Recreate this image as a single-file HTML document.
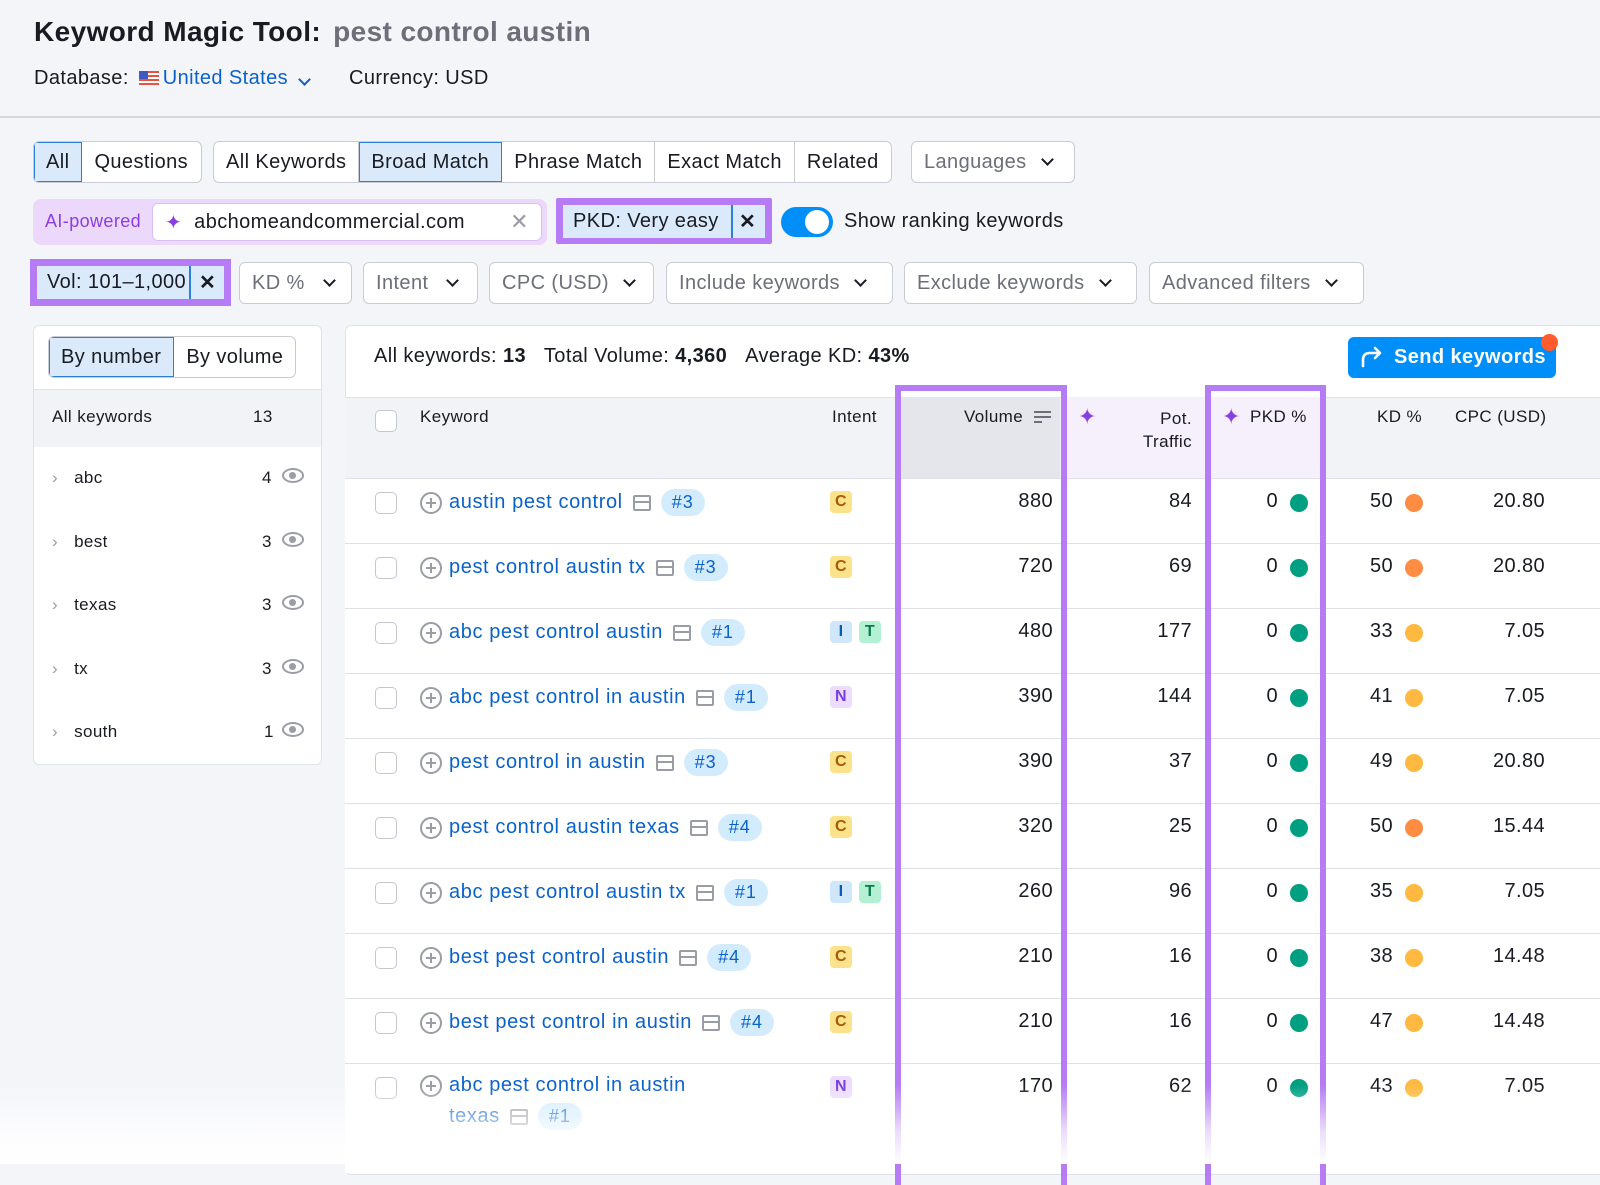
<!DOCTYPE html>
<html><head><meta charset="utf-8">
<style>
*{box-sizing:border-box;margin:0;padding:0}
body{width:1600px;height:1164px;background:#f4f5f9;font-family:"Liberation Sans",sans-serif;color:#191b23;position:relative;overflow:hidden;letter-spacing:0.4px}
.a{position:absolute}
.btn{position:absolute;height:42px;border:1px solid #c9ccd6;border-radius:6px;background:#fff;font-size:20px;display:flex;align-items:center;padding:0 12px;color:#191b23}
.grey{color:#6c6e79}
.chev{display:inline-block;width:9px;height:9px;border-right:2.5px solid #191b23;border-bottom:2.5px solid #191b23;transform:rotate(45deg);margin-left:16px;margin-top:-6px}
.seg{position:absolute;display:flex;height:42px;border:1px solid #c9ccd6;border-radius:6px;background:#fff;overflow:hidden;font-size:20px}
.seg div{padding:0 12px;display:flex;align-items:center;border-right:1px solid #c9ccd6}
.seg div:last-child{border-right:none}
.seg .on{background:#dbeafa;outline:1.5px solid #2b7fd6;outline-offset:-1.5px}
.row{position:absolute;left:345px;width:1255px;height:65px;border-top:1px solid #dfe0ea;background:#fff}
.cb{position:absolute;left:30px;top:13px;width:22px;height:22px;border:1.5px solid #c4c7d0;border-radius:5px;background:#fff}
.kw{position:absolute;left:75px;top:10px;display:flex;align-items:center;font-size:20px;color:#0a62c9;white-space:nowrap;letter-spacing:0.6px}
.plus{width:22px;height:22px;border:2px solid #9a9ca6;border-radius:50%;position:relative;margin-right:7px}
.plus:before{content:"";position:absolute;left:4px;top:8px;width:10px;height:2px;background:#9a9ca6}
.plus:after{content:"";position:absolute;left:8px;top:4px;width:2px;height:10px;background:#9a9ca6}
.ser{width:18px;height:16px;border:2px solid #9a9ca6;border-radius:2px;margin:0 10px;position:relative}
.ser:before{content:"";position:absolute;left:0;right:0;top:4px;height:2px;background:#9a9ca6}
.pos{background:#d3ecfd;color:#0a62c9;border-radius:14px;padding:3px 11px;font-size:18px;letter-spacing:1px}
.it{position:absolute;top:12px;width:22px;height:22px;border-radius:4px;font-size:16px;font-weight:bold;display:flex;align-items:center;justify-content:center}
.C{background:#fde28c;color:#a85a05}.I{background:#cfe6fb;color:#0a5bb5}.T{background:#b3f0d4;color:#0b7a4e}.N{background:#ecdcff;color:#7a3ee0}
.num{position:absolute;top:11px;font-size:20px;text-align:right;width:100px}
.dot{position:absolute;top:15px;width:18px;height:18px;border-radius:50%}
</style></head><body>
<div class="a" style="left:34px;top:16px;font-size:28px;font-weight:bold">Keyword Magic Tool:<span style="color:#6c6e79;font-weight:bold;margin-left:12px">pest control austin</span></div>
<div class="a" style="left:34px;top:67px;font-size:20px">Database: <span style="display:inline-block;width:20px;height:14px;background:repeating-linear-gradient(#e8523f 0 2px,#fff 2px 4px);position:relative;vertical-align:-1px;margin:0 4px"><span style="position:absolute;left:0;top:0;width:9px;height:8px;background:#3b5bc2"></span></span><span style="color:#0a62c9">United States</span><span class="chev" style="border-color:#0a62c9;margin-left:12px"></span><span style="margin-left:40px">Currency: USD</span></div>
<div class="a" style="left:0;top:116px;width:1600px;height:2px;background:#d4d6de"></div>

<div class="seg" style="left:33px;top:141px;width:169px"><div class="on">All</div><div>Questions</div></div>
<div class="seg" style="left:213px;top:141px"><div>All Keywords</div><div class="on">Broad Match</div><div>Phrase Match</div><div>Exact Match</div><div>Related</div></div>
<div class="btn" style="left:911px;top:141px;width:164px"><span class="grey">Languages</span><span class="chev"></span></div>

<div class="a" style="left:33px;top:199px;width:514px;height:46px;background:#ecd8fb;border-radius:8px"></div>
<div class="a" style="left:45px;top:211px;font-size:18px;color:#8a3ee0">AI-powered</div>
<div class="a" style="left:152px;top:203px;width:390px;height:38px;background:#fff;border-radius:6px;border:1px solid #d8c0f5;font-size:20px;display:flex;align-items:center;padding-left:12px"><span style="color:#8a3ee0;font-size:20px;margin-right:12px">✦</span>abchomeandcommercial.com<span style="margin-left:auto;margin-right:12px;color:#9a9ca6;font-size:22px">✕</span></div>
<div class="a" style="left:556px;top:198px;width:216px;height:46px;background:#b57cf6;border-radius:2px"></div>
<div class="a" style="left:563px;top:205px;width:202px;height:33px;background:#dbeafa;font-size:20px;display:flex;align-items:center;padding-left:10px">PKD: Very easy<span style="position:absolute;left:168px;top:0;height:33px;width:1.5px;background:#2b7fd6"></span><span style="position:absolute;left:176px;font-weight:bold;font-size:20px">✕</span></div>
<div class="a" style="left:781px;top:207px;width:52px;height:30px;border-radius:15px;background:#008ff8"><div class="a" style="left:24px;top:3px;width:24px;height:24px;border-radius:50%;background:#fff"></div></div>
<div class="a" style="left:844px;top:210px;font-size:20px">Show ranking keywords</div>

<div class="a" style="left:30px;top:259px;width:201px;height:47px;background:#b57cf6"></div>
<div class="a" style="left:37px;top:266px;width:187px;height:33px;background:#dbeafa;font-size:20px;display:flex;align-items:center;padding-left:10px">Vol: 101–1,000<span style="position:absolute;left:152px;top:0;height:33px;width:1.5px;background:#2b7fd6"></span><span style="position:absolute;left:162px;font-weight:bold">✕</span></div>
<div class="btn" style="left:239px;top:262px;width:113px"><span class="grey">KD %</span><span class="chev" style="margin-left:20px"></span></div>
<div class="btn" style="left:363px;top:262px;width:115px"><span class="grey">Intent</span><span class="chev" style="margin-left:20px"></span></div>
<div class="btn" style="left:489px;top:262px;width:165px"><span class="grey">CPC (USD)</span><span class="chev"></span></div>
<div class="btn" style="left:666px;top:262px;width:227px"><span class="grey">Include keywords</span><span class="chev"></span></div>
<div class="btn" style="left:904px;top:262px;width:233px"><span class="grey">Exclude keywords</span><span class="chev"></span></div>
<div class="btn" style="left:1149px;top:262px;width:215px"><span class="grey">Advanced filters</span><span class="chev"></span></div>

<div class="a" style="left:33px;top:325px;width:289px;height:440px;background:#fff;border:1px solid #e0e2ea;border-radius:6px"></div>
<div class="seg" style="left:48px;top:336px"><div class="on">By number</div><div>By volume</div></div>
<div class="a" style="left:34px;top:389px;width:287px;height:58px;background:#f2f3f7;border-top:1px solid #e0e2ea"></div>
<div class="a" style="left:52px;top:407px;font-size:17px">All keywords</div>
<div class="a" style="left:253px;top:407px;font-size:17px">13</div>
<div class="a" style="left:52px;top:466px;font-size:17px;line-height:24px">
<div style="height:63.5px;position:relative"><span style="color:#9a9ca6;margin-right:16px">›</span>abc<span class="a" style="left:210px;top:0">4</span><span class="a" style="left:230px;top:2px;width:22px;height:15px;border:2.5px solid #9a9ca6;border-radius:50%"><span class="a" style="left:5px;top:2px;width:7px;height:7px;border-radius:50%;background:#9a9ca6"></span></span></div>
<div style="height:63.5px;position:relative"><span style="color:#9a9ca6;margin-right:16px">›</span>best<span class="a" style="left:210px;top:0">3</span><span class="a" style="left:230px;top:2px;width:22px;height:15px;border:2.5px solid #9a9ca6;border-radius:50%"><span class="a" style="left:5px;top:2px;width:7px;height:7px;border-radius:50%;background:#9a9ca6"></span></span></div>
<div style="height:63.5px;position:relative"><span style="color:#9a9ca6;margin-right:16px">›</span>texas<span class="a" style="left:210px;top:0">3</span><span class="a" style="left:230px;top:2px;width:22px;height:15px;border:2.5px solid #9a9ca6;border-radius:50%"><span class="a" style="left:5px;top:2px;width:7px;height:7px;border-radius:50%;background:#9a9ca6"></span></span></div>
<div style="height:63.5px;position:relative"><span style="color:#9a9ca6;margin-right:16px">›</span>tx<span class="a" style="left:210px;top:0">3</span><span class="a" style="left:230px;top:2px;width:22px;height:15px;border:2.5px solid #9a9ca6;border-radius:50%"><span class="a" style="left:5px;top:2px;width:7px;height:7px;border-radius:50%;background:#9a9ca6"></span></span></div>
<div style="height:63.5px;position:relative"><span style="color:#9a9ca6;margin-right:16px">›</span>south<span class="a" style="left:212px;top:0">1</span><span class="a" style="left:230px;top:2px;width:22px;height:15px;border:2.5px solid #9a9ca6;border-radius:50%"><span class="a" style="left:5px;top:2px;width:7px;height:7px;border-radius:50%;background:#9a9ca6"></span></span></div>
</div>

<div class="a" style="left:345px;top:325px;width:1260px;height:850px;background:#fff;border:1px solid #e0e2ea;border-radius:6px"></div>
<div class="a" style="left:374px;top:345px;font-size:20px">All keywords: <b>13</b>&nbsp;&nbsp;&nbsp;Total Volume: <b>4,360</b>&nbsp;&nbsp;&nbsp;Average KD: <b>43%</b></div>
<div class="a" style="left:1348px;top:337px;width:208px;height:41px;background:#008ff8;border-radius:6px;color:#fff;font-size:20px;font-weight:bold;display:flex;align-items:center;padding-left:46px">Send keywords</div>
<svg class="a" style="left:1360px;top:346px" width="24" height="22" viewBox="0 0 24 22"><path d="M3 20 V14 Q3 7 10 7 H20 M15 2 L20 7 L15 12" fill="none" stroke="#fff" stroke-width="2.6" stroke-linecap="round" stroke-linejoin="round"/></svg>
<div class="a" style="left:1541px;top:334px;width:17px;height:17px;border-radius:50%;background:#ff5b2d"></div>

<div class="a" style="left:345px;top:397px;width:1255px;height:81px;background:#f2f3f7;border-top:1px solid #e0e2ea"></div>
<div class="a" style="left:1066px;top:397px;width:139px;height:81px;background:#f6effc"></div>
<div class="a" style="left:1205px;top:397px;width:120px;height:81px;background:#f6effc"></div>
<div class="a" style="left:901px;top:397px;width:159px;height:81px;background:#e4e6ec"></div>
<div class="cb" style="left:375px;top:410px"></div>
<div class="a" style="left:420px;top:407px;font-size:17px">Keyword</div>
<div class="a" style="left:832px;top:407px;font-size:17px">Intent</div>
<div class="a" style="left:964px;top:407px;font-size:17px">Volume</div>
<div class="a" style="left:1034px;top:411px;width:17px;height:2px;background:#6c6e79;box-shadow:0 5px 0 #6c6e79"></div><div class="a" style="left:1034px;top:421px;width:8px;height:2px;background:#6c6e79"></div>
<div class="a" style="left:1078px;top:404px;color:#8a3ee0;font-size:22px">✦</div>
<div class="a" style="left:1100px;top:407px;width:92px;text-align:right;font-size:17px;line-height:23px">Pot.<br>Traffic</div>
<div class="a" style="left:1222px;top:404px;color:#8a3ee0;font-size:22px">✦</div>
<div class="a" style="left:1250px;top:407px;font-size:17px">PKD %</div>
<div class="a" style="left:1377px;top:407px;font-size:17px">KD %</div>
<div class="a" style="left:1455px;top:407px;font-size:17px">CPC (USD)</div>

<div class="row" style="top:478px"><div class="cb"></div><div class="kw"><span class="plus"></span>austin pest control<span class="ser"></span><span class="pos">#3</span></div><div class="it C" style="left:485px">C</div><div class="num" style="left:608px">880</div><div class="num" style="left:747px">84</div><div class="num" style="left:833px">0</div><div class="dot" style="left:945px;background:#009f81"></div><div class="num" style="left:948px">50</div><div class="dot" style="left:1060px;background:#ff8c43"></div><div class="num" style="left:1100px">20.80</div></div>
<div class="row" style="top:543px"><div class="cb"></div><div class="kw"><span class="plus"></span>pest control austin tx<span class="ser"></span><span class="pos">#3</span></div><div class="it C" style="left:485px">C</div><div class="num" style="left:608px">720</div><div class="num" style="left:747px">69</div><div class="num" style="left:833px">0</div><div class="dot" style="left:945px;background:#009f81"></div><div class="num" style="left:948px">50</div><div class="dot" style="left:1060px;background:#ff8c43"></div><div class="num" style="left:1100px">20.80</div></div>
<div class="row" style="top:608px"><div class="cb"></div><div class="kw"><span class="plus"></span>abc pest control austin<span class="ser"></span><span class="pos">#1</span></div><div class="it I" style="left:485px">I</div><div class="it T" style="left:514px">T</div><div class="num" style="left:608px">480</div><div class="num" style="left:747px">177</div><div class="num" style="left:833px">0</div><div class="dot" style="left:945px;background:#009f81"></div><div class="num" style="left:948px">33</div><div class="dot" style="left:1060px;background:#ffb940"></div><div class="num" style="left:1100px">7.05</div></div>
<div class="row" style="top:673px"><div class="cb"></div><div class="kw"><span class="plus"></span>abc pest control in austin<span class="ser"></span><span class="pos">#1</span></div><div class="it N" style="left:485px">N</div><div class="num" style="left:608px">390</div><div class="num" style="left:747px">144</div><div class="num" style="left:833px">0</div><div class="dot" style="left:945px;background:#009f81"></div><div class="num" style="left:948px">41</div><div class="dot" style="left:1060px;background:#ffb940"></div><div class="num" style="left:1100px">7.05</div></div>
<div class="row" style="top:738px"><div class="cb"></div><div class="kw"><span class="plus"></span>pest control in austin<span class="ser"></span><span class="pos">#3</span></div><div class="it C" style="left:485px">C</div><div class="num" style="left:608px">390</div><div class="num" style="left:747px">37</div><div class="num" style="left:833px">0</div><div class="dot" style="left:945px;background:#009f81"></div><div class="num" style="left:948px">49</div><div class="dot" style="left:1060px;background:#ffb940"></div><div class="num" style="left:1100px">20.80</div></div>
<div class="row" style="top:803px"><div class="cb"></div><div class="kw"><span class="plus"></span>pest control austin texas<span class="ser"></span><span class="pos">#4</span></div><div class="it C" style="left:485px">C</div><div class="num" style="left:608px">320</div><div class="num" style="left:747px">25</div><div class="num" style="left:833px">0</div><div class="dot" style="left:945px;background:#009f81"></div><div class="num" style="left:948px">50</div><div class="dot" style="left:1060px;background:#ff8c43"></div><div class="num" style="left:1100px">15.44</div></div>
<div class="row" style="top:868px"><div class="cb"></div><div class="kw"><span class="plus"></span>abc pest control austin tx<span class="ser"></span><span class="pos">#1</span></div><div class="it I" style="left:485px">I</div><div class="it T" style="left:514px">T</div><div class="num" style="left:608px">260</div><div class="num" style="left:747px">96</div><div class="num" style="left:833px">0</div><div class="dot" style="left:945px;background:#009f81"></div><div class="num" style="left:948px">35</div><div class="dot" style="left:1060px;background:#ffb940"></div><div class="num" style="left:1100px">7.05</div></div>
<div class="row" style="top:933px"><div class="cb"></div><div class="kw"><span class="plus"></span>best pest control austin<span class="ser"></span><span class="pos">#4</span></div><div class="it C" style="left:485px">C</div><div class="num" style="left:608px">210</div><div class="num" style="left:747px">16</div><div class="num" style="left:833px">0</div><div class="dot" style="left:945px;background:#009f81"></div><div class="num" style="left:948px">38</div><div class="dot" style="left:1060px;background:#ffb940"></div><div class="num" style="left:1100px">14.48</div></div>
<div class="row" style="top:998px"><div class="cb"></div><div class="kw"><span class="plus"></span>best pest control in austin<span class="ser"></span><span class="pos">#4</span></div><div class="it C" style="left:485px">C</div><div class="num" style="left:608px">210</div><div class="num" style="left:747px">16</div><div class="num" style="left:833px">0</div><div class="dot" style="left:945px;background:#009f81"></div><div class="num" style="left:948px">47</div><div class="dot" style="left:1060px;background:#ffb940"></div><div class="num" style="left:1100px">14.48</div></div>
<div class="row" style="top:1063px;height:110px"><div class="cb"></div><div class="kw"><span class="plus"></span>abc pest control in austin</div><div class="a" style="left:104px;top:39px;display:flex;align-items:center;font-size:20px;color:#0a62c9;letter-spacing:0.6px">texas<span class="ser"></span><span class="pos">#1</span></div><div class="it N" style="left:485px">N</div><div class="num" style="left:608px">170</div><div class="num" style="left:747px">62</div><div class="num" style="left:833px">0</div><div class="dot" style="left:945px;background:#009f81"></div><div class="num" style="left:948px">43</div><div class="dot" style="left:1060px;background:#ffb940"></div><div class="num" style="left:1100px">7.05</div></div>

<div class="a" style="left:895px;top:385px;width:172px;height:800px;border:6px solid #b57cf6;border-bottom:none"></div>
<div class="a" style="left:1205px;top:385px;width:121px;height:800px;border:6px solid #b57cf6;border-bottom:none"></div>
<div class="a" style="left:0;top:1085px;width:1600px;height:79px;background:linear-gradient(rgba(255,255,255,0),rgba(255,255,255,0.75) 60%,#fff)"></div>
</body></html>
